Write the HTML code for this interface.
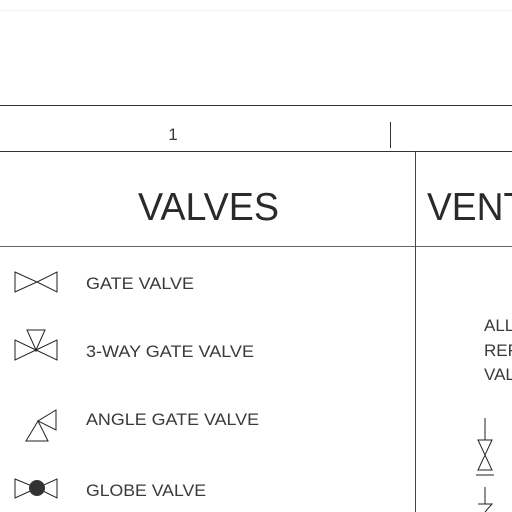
<!DOCTYPE html>
<html><head><style>
html,body{margin:0;padding:0;background:#fff;width:512px;height:512px;overflow:hidden}
svg text{font-family:"Liberation Sans",sans-serif;fill:#3a3a3a}
</style></head><body>
<svg width="512" height="512" viewBox="0 0 512 512" xmlns="http://www.w3.org/2000/svg">
<g stroke="#222" stroke-width="1" fill="none">
<line x1="0" y1="105.5" x2="512" y2="105.5" stroke="#333"/>
<line x1="0" y1="151.5" x2="512" y2="151.5" stroke="#333"/>
<line x1="0" y1="246.5" x2="512" y2="246.5" stroke="#666"/>
<line x1="415.5" y1="151" x2="415.5" y2="512" stroke="#444"/>
<line x1="390.5" y1="122" x2="390.5" y2="148" stroke="#333"/>
<line x1="0" y1="10.5" x2="512" y2="10.5" stroke="#f2f2f2"/>
<path d="M15 272 L15 292 L37 282 Z M57 272 L57 292 L37 282 Z"/>
<path d="M15 340 L15 360 L36 350 Z M57 340 L57 360 L36 350 Z M27 330 L45 330 L36 350 Z"/>
<path d="M56 410 L56 430 L38 421 Z M26 441 L48 441 L38 421 Z"/>
<path d="M15 479 L15 498 L37 488 Z M57 479 L57 498 L37 488 Z"/>
<path d="M485 418 L485 440 M478 440 L492 440 L485 455 Z M478 470 L492 470 L485 455 Z M476 475 L494 475"/>
<path d="M485 487 L485 504 M478 504 L492 504 L485 512"/>
</g>
<circle cx="37" cy="488" r="8" fill="#333"/>
<circle cx="36" cy="350" r="1.5" fill="#222"/>
<text x="173" y="140" font-size="17" text-anchor="middle">1</text>
<text x="138" y="220" font-size="39" textLength="141" lengthAdjust="spacingAndGlyphs" style="fill:#2a2a2a">VALVES</text>
<text x="427" y="220" font-size="39" textLength="124" lengthAdjust="spacingAndGlyphs" style="fill:#2a2a2a">VENTS</text>
<g font-size="17">
<text x="86" y="289" textLength="108" lengthAdjust="spacingAndGlyphs">GATE VALVE</text>
<text x="86" y="357" textLength="168" lengthAdjust="spacingAndGlyphs">3-WAY GATE VALVE</text>
<text x="86" y="425" textLength="173" lengthAdjust="spacingAndGlyphs">ANGLE GATE VALVE</text>
<text x="86" y="496" textLength="120" lengthAdjust="spacingAndGlyphs">GLOBE VALVE</text>
<text x="484" y="331">ALL</text>
<text x="484" y="356">REF</text>
<text x="484" y="380">VAL</text>
</g>
</svg>
</body></html>
